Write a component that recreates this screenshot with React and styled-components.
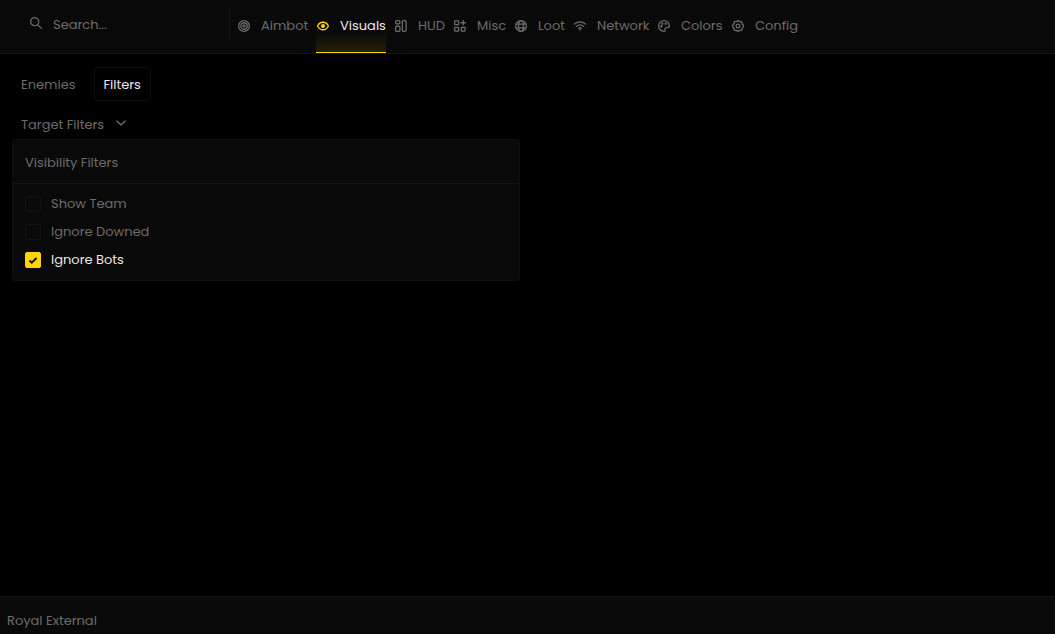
import { useState } from "react";
import styled, { createGlobalStyle } from "styled-components";

const TABS = [
  { name: "Aimbot", labelWidth: 47 },
  { name: "Visuals", labelWidth: 46 },
  { name: "HUD", labelWidth: 27 },
  { name: "Misc", labelWidth: 29 },
  { name: "Loot", labelWidth: 27 },
  { name: "Network", labelWidth: 52 },
  { name: "Colors", labelWidth: 42 },
  { name: "Config", labelWidth: 43 }
];

const FILTERS = [
  { id: "team", label: "Show Team" },
  { id: "downed", label: "Ignore Downed" },
  { id: "bots", label: "Ignore Bots" }
];

const icons = {
  Aimbot: (
    <>
      <circle cx="12" cy="12" r="10" />
      <circle cx="12" cy="12" r="6" />
      <circle cx="12" cy="12" r="2" />
    </>
  ),
  Visuals: (
    <>
      <path d="M2 12C4 7.500 7.600 5 12 5s8 2.500 10 7c-2 4.500-5.600 7-10 7s-8-2.500-10-7z" />
      <circle cx="12" cy="12" r="2.500" fill="currentColor" />
    </>
  ),
  HUD: (
    <>
      <rect x="2" y="2" width="8" height="6" rx="2" />
      <rect x="2" y="12.500" width="8" height="9.500" rx="2" />
      <rect x="14.500" y="2" width="7" height="20" rx="2" />
    </>
  ),
  Misc: (
    <>
      <rect x="2" y="2.500" width="7.500" height="7" rx="1" />
      <rect x="2" y="14.500" width="7.500" height="7" rx="1" />
      <rect x="14.500" y="14.500" width="7" height="7" rx="1" />
      <path d="M18 2v8M14 6h8" />
    </>
  ),
  Loot: (
    <>
      <circle cx="12" cy="12" r="10" />
      <ellipse cx="12" cy="12" rx="4.500" ry="10" />
      <path d="M3 8.500h18M3 15.500h18" />
    </>
  ),
  Network: (
    <>
      <path d="M2 8.500c6-5 14-5 20 0M5.500 12.500c4-3.300 9-3.300 13 0M9 16c2-1.500 4-1.500 6 0" />
      <circle cx="12" cy="18.500" r="0.800" fill="currentColor" />
    </>
  ),
  Colors: (
    <>
      <path d="M12 2a10 10 0 1 0 0 20c2 0 2.500-1.500 2-3-.6-2.200.5-4 3-4h2.500c1.500 0 2.500-1 2.500-3A10 10 0 0 0 12 2z" />
      <circle cx="7" cy="12.500" r="1" />
      <circle cx="9" cy="7.500" r="1" />
      <circle cx="15" cy="7.500" r="1" />
    </>
  ),
  Config: (
    <>
      <path d="M12 2l3 1.800 3.800.2.900 3.800L22 10.500v3l-2.300 2.700-.9 3.800-3.800.2L12 22l-3-1.800-3.800-.2-.9-3.800L2 13.500v-3l2.300-2.700.9-3.800L9 3.800z" />
      <circle cx="12" cy="12" r="3.500" />
    </>
  )
};

const App = () => {
  const [activeTab, setActiveTab] = useState("Visuals");
  const [activePage, setActivePage] = useState("Filters");
  const [isOpen, setIsOpen] = useState(true);
  const [checked, setChecked] = useState({ team: false, downed: false, bots: true });

  return (
    <Wrapper>
      <GlobalStyle />
      <Header>
        <SearchBox>
          <Icon viewBox="-1 -1 26 26" aria-hidden="true">
            <circle cx="9.500" cy="9.500" r="7.500" />
            <path d="M15 15l7 7" />
          </Icon>
          <SearchInput type="text" aria-label="Search" placeholder="Search..." />
        </SearchBox>
        <Nav>
          {TABS.map(({ name, labelWidth }) => (
            <Tab key={name} type="button" $active={name === activeTab} onClick={() => setActiveTab(name)}>
              <Icon viewBox="-1 -1 26 26" aria-hidden="true">
                {icons[name]}
              </Icon>
              <TabLabel $width={labelWidth} $active={name === activeTab}>
                {name}
              </TabLabel>
            </Tab>
          ))}
        </Nav>
      </Header>

      <Main>
        <Pages>
          {["Enemies", "Filters"].map((page) => (
            <PageButton key={page} type="button" $active={page === activePage} onClick={() => setActivePage(page)}>
              {page}
            </PageButton>
          ))}
        </Pages>
        <GroupToggle type="button" aria-expanded={isOpen} onClick={() => setIsOpen(!isOpen)}>
          Target Filters
          <Icon viewBox="0 0 24 24" aria-hidden="true">
            <path d="M5 5l7 7 7-7" />
          </Icon>
        </GroupToggle>
        {isOpen && (
          <Panel>
            <PanelTitle>Visibility Filters</PanelTitle>
            <Options>
              {FILTERS.map(({ id, label }) => (
                <Option key={id} htmlFor={id} $checked={checked[id]}>
                  <CheckHolder>
                    <Checkbox
                      id={id}
                      type="checkbox"
                      checked={checked[id]}
                      onChange={(event) => setChecked({ ...checked, [id]: event.target.checked })}
                    />
                    {checked[id] && (
                      <Tick viewBox="0 0 16 16" aria-hidden="true">
                        <path d="M4.500 8.500l2.300 2.200 4.700-4.700" />
                      </Tick>
                    )}
                  </CheckHolder>
                  {label}
                </Option>
              ))}
            </Options>
          </Panel>
        )}
      </Main>

      <Footer>Royal External</Footer>
    </Wrapper>
  );
};

const GlobalStyle = createGlobalStyle`
  * {
    box-sizing: border-box;
  }
  body {
    margin: 0;
    background: #000;
    color: #6e6b6c;
    font-family: Poppins, Inter, "Liberation Sans", sans-serif;
    font-size: 13px;
    line-height: 20px;
  }
  button, input {
    padding: 0;
    border: 0;
    background: none;
    color: inherit;
    font: inherit;
  }
  button {
    cursor: pointer;
  }
`;

const Wrapper = styled.div`
  display: flex;
  flex-direction: column;
  min-height: 100vh;
`;

const Header = styled.header`
  display: flex;
  height: 54px;
  background: #090909;
  border-bottom: 1px solid #151515;
`;

const Icon = styled.svg`
  flex: none;
  width: 14px;
  height: 14px;
  fill: none;
  stroke: currentColor;
  stroke-width: 2.4;
  stroke-linecap: round;
  stroke-linejoin: round;
`;

const SearchBox = styled.div`
  display: flex;
  align-items: center;
  gap: 10px;
  width: 230px;
  height: 36px;
  margin-top: 7px;
  padding: 0 12px 4px 29px;
  border-right: 1px solid #121212;
`;

const SearchInput = styled.input`
  flex: 1;
  min-width: 0;
  padding-top: 4px;
  outline: none;
  &::placeholder {
    color: #6e6b6c;
    opacity: 1;
  }
`;

const Nav = styled.nav`
  display: flex;
  gap: 8px;
  padding-left: 7px;
`;

const Tab = styled.button`
  display: flex;
  align-items: center;
  gap: 10px;
  padding-bottom: 1px;
  color: ${({ $active }) => ($active ? "#ffd500" : "inherit")};
  background: ${({ $active }) => ($active ? "linear-gradient(transparent 60%, #ffd5001c)" : "none")};
  border-bottom: 1px solid ${({ $active }) => ($active ? "#ffd500" : "transparent")};
`;

const TabLabel = styled.span`
  width: ${({ $width }) => $width}px;
  color: ${({ $active }) => ($active ? "#f0e6e8" : "inherit")};
  text-align: left;
  white-space: nowrap;
`;

const Main = styled.main`
  flex: 1;
  padding: 13px 12px;
`;

const Pages = styled.div`
  display: flex;
  gap: 9px;
`;

const PageButton = styled.button`
  height: 34px;
  padding: 2px 9px 0 8px;
  border: 1px solid ${({ $active }) => ($active ? "#0d0d0d" : "transparent")};
  border-radius: 4px;
  color: ${({ $active }) => ($active ? "#f0e6e8" : "inherit")};
`;

const GroupToggle = styled.button`
  display: flex;
  align-items: center;
  gap: 10px;
  height: 38px;
  padding: 10px 9px 0;
`;

const Panel = styled.section`
  width: 50%;
  max-width: 508px;
  background: #090909;
  border: 1px solid #101010;
  border-radius: 3px;
`;

const PanelTitle = styled.h2`
  margin: 0;
  padding: 13px 12px 10px;
  border-bottom: 1px solid #131313;
  font-size: 13px;
  font-weight: 400;
  line-height: 20px;
`;

const Options = styled.div`
  display: flex;
  flex-direction: column;
  gap: 8px;
  padding: 10px 12px;
`;

const Option = styled.label`
  display: flex;
  align-items: center;
  gap: 10px;
  color: ${({ $checked }) => ($checked ? "#f0e6e8" : "inherit")};
`;

const CheckHolder = styled.span`
  display: grid;
  > * {
    grid-area: 1 / 1;
  }
`;

const Checkbox = styled.input`
  appearance: none;
  width: 16px;
  height: 16px;
  margin: 0;
  border: 1px solid #121212;
  border-radius: 2px;
  &:checked {
    background: #ffd500;
    border-color: #ffd500;
  }
`;

const Tick = styled.svg`
  width: 16px;
  height: 16px;
  fill: none;
  stroke: #111;
  stroke-width: 2;
  pointer-events: none;
`;

const Footer = styled.footer`
  height: 38px;
  padding: 14px 7px 0;
  background: #090909;
  border-top: 1px solid #151515;
`;

export default App;
